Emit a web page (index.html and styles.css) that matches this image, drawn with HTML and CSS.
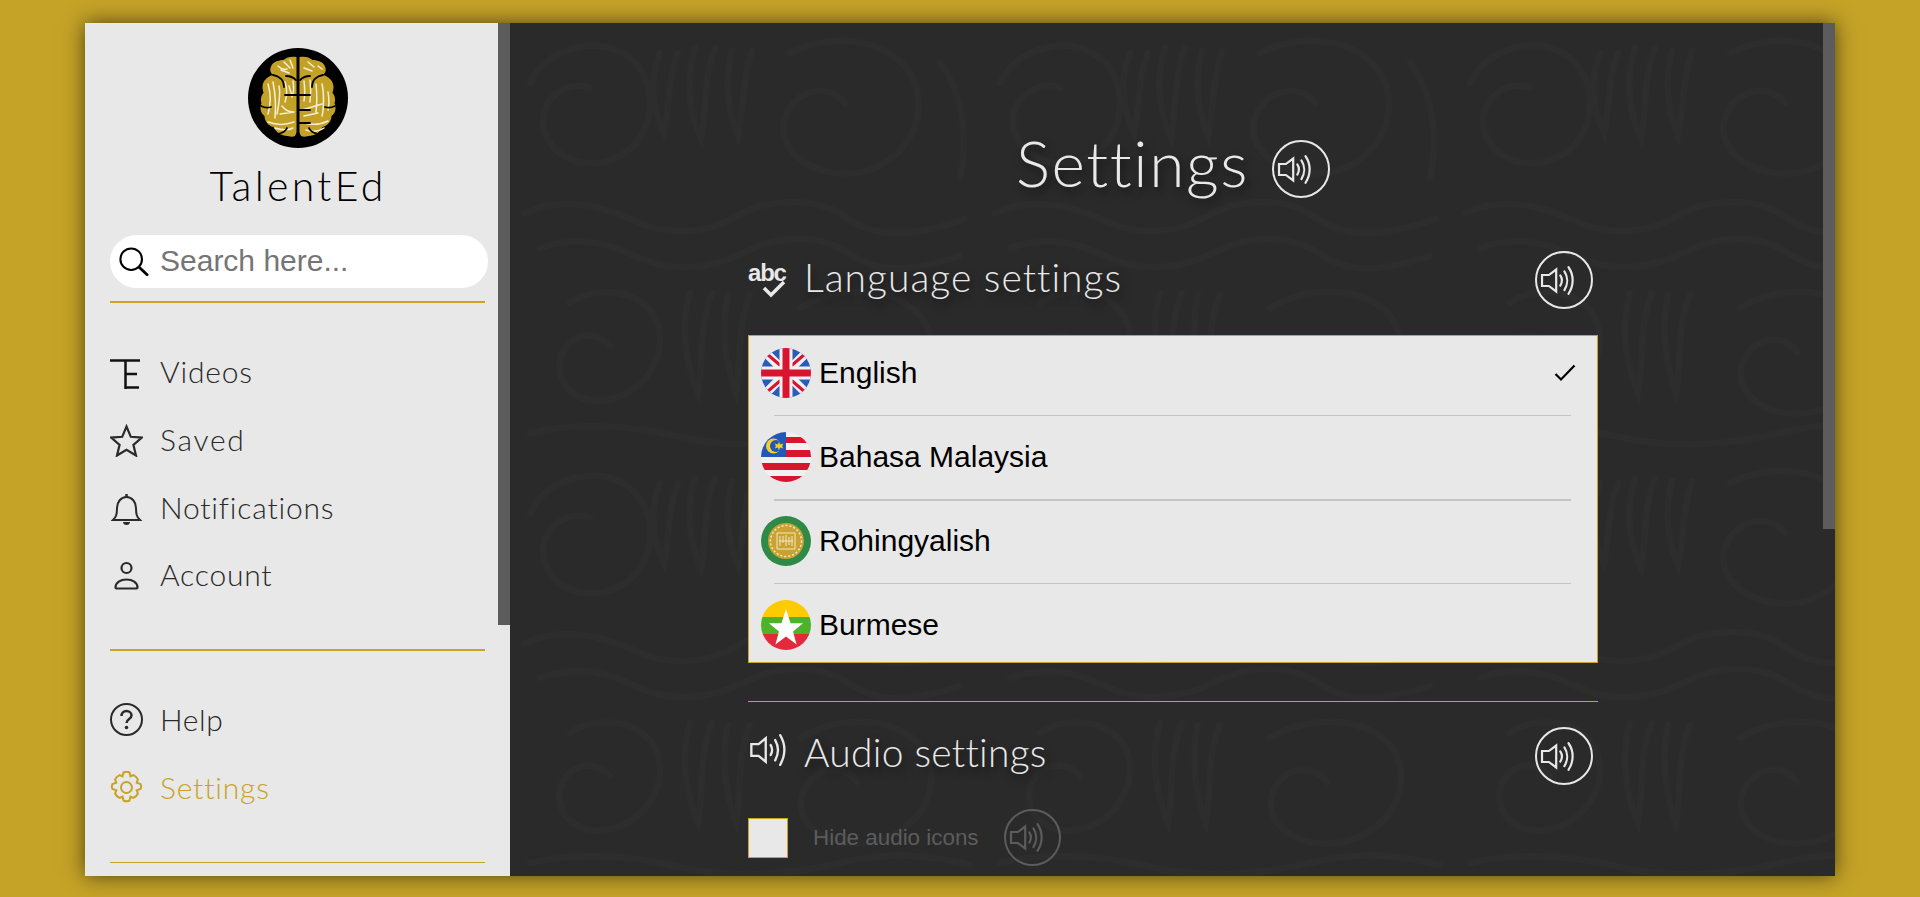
FILE: index.html
```html
<!DOCTYPE html>
<html lang="en">
<head>
<meta charset="utf-8">
<title>TalentEd - Settings</title>
<link rel="stylesheet" href="styles.css">
</head>
<body>
<svg class="defs" width="0" height="0" aria-hidden="true">
  <defs>
    <symbol id="speaker" viewBox="0 0 58 58">
      <path d="M5.5 23h7.500l8-6v24l-8-6H5.500z" fill="none" stroke="currentColor" stroke-width="2.400"/>
      <path d="M25.500 23.500c2.300 3.500 2.300 7.500 0 11M30 19c4 6 4 14 0 20.500M34.500 14.500c6 8.500 6 20 0 29" fill="none" stroke="currentColor" stroke-width="2.400" stroke-linecap="round"/>
    </symbol>
    <pattern id="swirl" width="470" height="430" patternUnits="userSpaceOnUse">
      <g fill="none" stroke="#2d2d2d" stroke-width="6" stroke-linecap="round">
        <path d="M20 60c15-35 70-50 100-25s25 75-5 95-70 10-80-20 20-55 45-45"/>
        <path d="M150 30c-12 30-6 60 4 80 6-30 4-55 14-80M185 25c-10 30-6 65 6 90 6-30 2-60 14-90M222 28c-8 30-4 60 6 85 6-30 4-55 14-85"/>
        <path d="M280 30c50-25 110-10 125 30s-15 85-60 90-80-25-70-55 45-35 60-15"/>
        <path d="M430 40c20 25 30 70 20 115"/>
        <path d="M15 190c40-18 80-6 110 8s70 14 100-4 80-22 110 0 70 20 120 2"/>
        <path d="M30 225c40-14 70-4 100 10s70 12 105-6 75-18 105 2 60 18 110 2"/>
        <path d="M60 280c25-18 70-14 85 15s-5 70-40 80-60-12-55-38 35-32 50-14"/>
        <path d="M180 270c-10 34-4 70 8 100 6-34 0-66 14-100M218 272c-8 34-2 70 8 98 6-34 0-66 14-98"/>
        <path d="M290 285c40-25 105-22 125 15s-10 85-60 90-75-30-60-55 40-22 52-6"/>
        <path d="M20 410c50-12 100-8 150 4s110 8 160-4 90-8 130 2"/>
      </g>
    </pattern>
  </defs>
</svg>

<div class="frame">
  <aside class="sidebar">
    <div class="scroll-thumb side-thumb"></div>
    <div class="brand">
      <svg class="logo" viewBox="0 0 100 100">
        <circle cx="50" cy="50" r="50" fill="#000"/>
        <path d="M48.500 9c-5-1-10 0-13 3-5 0-12 2-13 8-1 3 1 6 3 7-6 1-11 6-11 12 0 3 1 5 1 6-3 3-3 8-2 10-2 5-1 10 3 13 0 5 4 10 9 11 2 5 8 9 14 9 4 1 7 1 9-1z" fill="#c3a126"/>
        <path d="M51.500 9c5-1 10 0 13 3 5 0 12 2 13 8 1 3-1 6-3 7 6 1 11 6 11 12 0 3-1 5-1 6 3 3 3 8 2 10 2 5 1 10-3 13 0 5-4 10-9 11-2 5-8 9-14 9-4 1-7 1-9-1z" fill="#c3a126"/>
        <g fill="none" stroke="#f6efd6" stroke-width="1.500" stroke-linecap="round">
          <path d="M20 36c3 10 3 20 0 30M25 34c2 10 3 24 2 36M31 38c2 8 0 18-2 28M37 34c2 6 2 14 0 20M41 38l3 10M45 33c1 8 1 10-1 16M34 58c3 4 7 6 11 6M32 66l14-2M20 74c8 3 18 3 26 0M27 80c6 2 12 3 18 0M36 14l6 6M30 18c3 3 6 4 9 3M42 12l3 8M33 22l8 3"/>
          <path d="M56 33c1 8 1 14 0 20M62 32c1 8 1 15 0 22M68 36c1 10 1 20 0 28M74 36c2 8 2 24 0 32M80 44c1 6 1 14 0 18M54 62l20-6M56 68l14-3M56 75c8 2 16 2 24-2M58 82c6 2 12 2 18-2M60 14l6 5M70 18l4 3M56 20l8 3"/>
        </g>
        <g fill="none" stroke="#000" stroke-width="1.800" stroke-linecap="round">
          <path d="M50 9v22M50 48v36M50 84l-3 6M50 84l3 6M37 47h25M50 62h12M50 75h12"/>
          <path d="M25 27c6 1 11 5 11 12M75 27c-6 1-11 5-11 12M13 58c4 2 7 2 10 1M87 58c-4 2-7 2-10 1M30 86c4-1 8-3 9-6M70 86c-4-1-8-3-9-6M38 28c5 0 8 2 10 4M62 28c-5 0-8 2-10 4"/>
        </g>
      </svg>
      <div class="brand-name">TalentEd</div>
    </div>

    <label class="search">
      <svg class="search-icon" viewBox="0 0 32 32"><circle cx="13" cy="13" r="11.500" fill="none" stroke="#000" stroke-width="2.200"/><path d="M21.500 21.500 30 29.500" stroke="#000" stroke-width="3" stroke-linecap="round"/></svg>
      <input class="search-input" type="text" placeholder="Search here...">
    </label>
    <div class="gold-rule thick"></div>

    <nav class="nav first">
      <a class="nav-item">
        <svg class="nav-icon" viewBox="0 0 33 33" fill="none" stroke="#111" stroke-width="2.500"><path d="M0 4.500h30M15.500 4.500v29M16 18h11M16 31.500h13"/></svg>
        <span class="t-videos">Videos</span>
      </a>
      <a class="nav-item">
        <svg class="nav-icon" viewBox="0 0 33 33" fill="none" stroke="#2a2a2a" stroke-width="2.200" stroke-linejoin="miter"><path d="M16.500 2.500l4.300 10.300 11 .8-8.400 7.200 2.600 10.700-9.500-5.800L7 31.500l2.600-10.700L1.200 13.600l11-.8z"/></svg>
        <span class="t-saved">Saved</span>
      </a>
      <a class="nav-item">
        <svg class="nav-icon" viewBox="0 0 33 33" fill="none" stroke="#2a2a2a" stroke-width="2"><path d="M3 28c3-3 4-5 4-12 0-6 4-11 9.500-11S26 10 26 16c0 7 1 9 4 12z"/><path d="M16.500 2v3" stroke-width="2.500"/><path d="M13 30h7c0 4-7 4-7 0z" fill="#2a2a2a" stroke="none"/></svg>
        <span class="t-notif">Notifications</span>
      </a>
      <a class="nav-item">
        <svg class="nav-icon" viewBox="0 0 33 33" fill="none" stroke="#2a2a2a" stroke-width="2.200"><circle cx="16.500" cy="9" r="5"/><path d="M5.500 28.500c0-5 5-8 11-8s11 3 11 8c0 .5-.5 1-1 1h-20c-.5 0-1-.5-1-1z"/></svg>
        <span class="t-account">Account</span>
      </a>
    </nav>
    <div class="gold-rule thick gap-nav"></div>

    <nav class="nav second">
      <a class="nav-item">
        <svg class="nav-icon" viewBox="0 0 33 33" fill="none" stroke="#2a2a2a" stroke-width="2"><circle cx="16.500" cy="16.500" r="15.500"/><path d="M11.500 13c0-3 2.200-5 5-5s5 2 5 4.500c0 3.500-5 3.500-5 7.500" stroke-width="2.500"/><circle cx="16.500" cy="24.500" r="1.800" fill="#2a2a2a" stroke="none"/></svg>
        <span class="t-help">Help</span>
      </a>
      <a class="nav-item active">
        <svg class="nav-icon" viewBox="0 0 33 33" fill="none" stroke="#c9a227" stroke-width="2"><circle cx="16.500" cy="16.500" r="5.500"/><path d="M13.500 1.500c1.500-.8 4.500-.8 6 0l1 3.800 3-1.200c1.500.6 3.700 2.800 4.400 4.400l-1.200 3.200 3.800 1.300c.8 1.500.8 3.500 0 5l-3.800 1.300 1.200 3.200c-.7 1.600-2.900 3.800-4.400 4.400l-3-1.200-1 3.800c-1.500.8-4.500.8-6 0l-1-3.800-3 1.200c-1.500-.6-3.700-2.800-4.400-4.400l1.200-3.200-3.800-1.300c-.8-1.500-.8-3.500 0-5l3.800-1.300L5.100 8.500c.7-1.600 2.900-3.800 4.400-4.400l3 1.200z"/></svg>
        <span class="t-settings">Settings</span>
      </a>
    </nav>
    <div class="gold-rule thin gap-nav2"></div>
  </aside>

  <main class="main">
    <svg class="texture" width="100%" height="100%" aria-hidden="true"><rect width="100%" height="100%" fill="url(#swirl)"/></svg>
    <div class="scroll-thumb main-thumb"></div>
    <div class="content">
      <div class="page-title">
        <h1>Settings</h1>
        <button class="audio-btn" aria-label="Play"><svg viewBox="0 0 58 58"><use href="#speaker"/></svg></button>
      </div>

      <section class="section-head lang-head">
        <span class="abc-icon"><span class="abc-text">abc</span><svg class="abc-check" viewBox="0 0 26 18"><path d="M3 8l7 7L23 2" fill="none" stroke="#e8e8e8" stroke-width="3.500"/></svg></span>
        <h2 class="h-lang">Language settings</h2>
        <button class="audio-btn push" aria-label="Play"><svg viewBox="0 0 58 58"><use href="#speaker"/></svg></button>
      </section>

      <ul class="lang-list">
        <li class="lang-row">
          <svg class="flag" viewBox="0 0 50 50">
            <defs><clipPath id="c1"><circle cx="25" cy="25" r="25"/></clipPath></defs>
            <g clip-path="url(#c1)">
              <rect width="50" height="50" fill="#2a5cb8"/>
              <path d="M0 0l50 50M50 0 0 50" stroke="#f1f1f1" stroke-width="9"/>
              <path d="M6 6l14 12M44 6 30 18M6 44l14-12M44 44 30 32" stroke="#d8142f" stroke-width="3"/>
              <path d="M25 0v50M0 25h50" stroke="#f1f1f1" stroke-width="13"/>
              <path d="M25 0v50M0 25h50" stroke="#d8142f" stroke-width="7"/>
            </g>
          </svg>
          <span class="lang-name">English</span>
          <svg class="tick" viewBox="0 0 22 18"><path d="M1.500 10l5.500 5.500L20.500 1.500" fill="none" stroke="#000" stroke-width="2.200"/></svg>
        </li>
        <li class="lang-row">
          <svg class="flag" viewBox="0 0 50 50">
            <defs><clipPath id="c2"><circle cx="25" cy="25" r="25"/></clipPath></defs>
            <g clip-path="url(#c2)">
              <rect width="50" height="50" fill="#f1f1f1"/>
              <path d="M25 5h25v6H25zM25 18h25v7H25zM0 31h50v7H0zM0 44h50v7H0z" fill="#d8142f"/>
              <rect width="25" height="25" fill="#2358b8"/>
              <circle cx="12.500" cy="14" r="7.500" fill="#f5cf2a"/>
              <circle cx="15" cy="14" r="6" fill="#2358b8"/>
              <path d="M18 9.500l1.100 2.900 3-.8-.8 2.400 0 0-.1 0 .8 2.400-3-.8-1 2.900-1.100-2.900-3 .8.900-2.400-.9-2.400 3 .8z" fill="#f5cf2a"/>
            </g>
          </svg>
          <span class="lang-name">Bahasa Malaysia</span>
        </li>
        <li class="lang-row">
          <svg class="flag" viewBox="0 0 50 50">
            <circle cx="25" cy="25" r="25" fill="#2e8a46"/>
            <circle cx="25" cy="25" r="18" fill="#c9a233"/>
            <circle cx="25" cy="25" r="15.500" fill="none" stroke="#f2e8c2" stroke-width="1.500" stroke-dasharray="2 2"/>
            <path d="M16 17h18v16H16z" fill="none" stroke="#f2e8c2" stroke-width="1"/>
            <path d="M19 20v10M22 20v7M25 19v11M28 21v8M31 20v10M18 25h14" stroke="#f2e8c2" stroke-width="1"/>
          </svg>
          <span class="lang-name">Rohingyalish</span>
        </li>
        <li class="lang-row">
          <svg class="flag" viewBox="0 0 50 50">
            <defs><clipPath id="c4"><circle cx="25" cy="25" r="25"/></clipPath></defs>
            <g clip-path="url(#c4)">
              <rect width="50" height="17" fill="#fdcb01"/>
              <rect y="17" width="50" height="17" fill="#4eb32a"/>
              <rect y="34" width="50" height="16" fill="#e32a3d"/>
              <path d="M25 9l4.600 14.200H42L32 31.500l3.600 13-10.600-8-10.600 8 3.600-13-10-8.300h12.400z" fill="#fff"/>
            </g>
          </svg>
          <span class="lang-name">Burmese</span>
        </li>
      </ul>

      <div class="gold-rule section-rule"></div>

      <section class="section-head audio-head">
        <svg class="plain-speaker" viewBox="0 0 42 40"><path d="M2.500 13.500h8l8-6.500v26l-8-6.500h-8z" fill="none" stroke="#e8e8e8" stroke-width="2.600"/><path d="M24 14.500c2 3.500 2 7.500 0 11M29 9c4 7 4 15 0 22.500M34.500 3.500c6 10 6 22 0 33" fill="none" stroke="#e8e8e8" stroke-width="2.600" stroke-linecap="round"/></svg>
        <h2 class="h-audio">Audio settings</h2>
        <button class="audio-btn push" aria-label="Play"><svg viewBox="0 0 58 58"><use href="#speaker"/></svg></button>
      </section>

      <div class="hide-row">
        <span class="checkbox"></span>
        <span class="hide-label">Hide audio icons</span>
        <button class="audio-btn muted" aria-label="Play"><svg viewBox="0 0 58 58"><use href="#speaker"/></svg></button>
      </div>
    </div>
  </main>
</div>
</body>
</html>
```

FILE: styles.css
```css
* { box-sizing: border-box; }
html, body { margin: 0; height: 100%; overflow: hidden; }
body {
  background: #c5a327;
  padding: 23px 85px 21px;
  font-family: "Lato", "Liberation Sans", sans-serif;
}
.defs { position: absolute; }

.frame {
  display: flex;
  height: 853px;
  box-shadow: 0 0 20px rgba(0, 0, 0, .6);
  overflow: hidden;
}

/* sidebar */
.sidebar {
  position: relative;
  flex: 0 0 425px;
  background: #e8e8e8;
  padding: 25px 0 0 25px;
  overflow: hidden;
}
.scroll-thumb { position: absolute; top: 0; right: 0; width: 12px; background: #5c5c5c; }
.side-thumb { height: 602px; }
.main-thumb { height: 506px; z-index: 1; }

.brand { display: flex; flex-direction: column; align-items: center; width: 376px; }
.logo { width: 100px; height: 100px; display: block; }
.brand-name {
  margin-top: 13px;
  height: 49px;
  line-height: 49px;
  font-size: 41px;
  font-weight: 300;
  letter-spacing: 3.300px;
  color: #000;
}

.search {
  display: flex;
  align-items: center;
  width: 378px;
  height: 53px;
  margin-top: 25px;
  padding-left: 9px;
  background: #fff;
  border-radius: 27px;
}
.search-icon { width: 30px; height: 30px; flex: none; }
.search-input {
  flex: 1;
  min-width: 0;
  margin-left: 9px;
  padding-bottom: 3px;
  border: 0;
  outline: 0;
  background: transparent;
  font-family: "Liberation Sans", Arial, sans-serif;
  font-size: 30px;
  color: #111;
}
.search-input::placeholder { color: #757575; opacity: 1; }

.gold-rule { background: #c9a227; }
.sidebar .gold-rule { width: 375px; }
.thick { height: 2px; margin-top: 13px; }
.thin { height: 1px; }
.gap-nav { margin-top: 39px; }
.gap-nav2 { margin-top: 41px; }

.nav { display: flex; flex-direction: column; }
.nav.first { margin-top: 36px; }
.nav.second { margin-top: 35px; }
.nav-item {
  display: flex;
  align-items: center;
  gap: 17px;
  height: 67.700px;
  font-size: 30px;
  font-weight: 300;
  color: #2a2a2a;
  letter-spacing: .8px;
}
.nav-item span { padding-bottom: 3px; }
.nav.second .nav-item span { padding-bottom: 1px; }
.nav-item .t-saved { letter-spacing: 1.700px; }
.nav-item .t-help { letter-spacing: .6px; }
.nav-item.active { color: #c9a227; }
.nav-icon { width: 33px; height: 33px; flex: none; }

/* main */
.main {
  position: relative;
  flex: 1;
  background: #2a2a2a;
  overflow: hidden;
}
.texture { position: absolute; inset: 0; }
.content {
  position: relative;
  width: 850px;
  margin-left: 238px;
}

.page-title {
  display: flex;
  justify-content: center;
  align-items: center;
  gap: 23px;
  padding-top: 92px;
  height: 200px;
}
h1, h2 {
  margin: 0;
  font-weight: 300;
  color: #e8e8e8;
  text-shadow: 3px 5px 8px rgba(0, 0, 0, .55);
}
h1 { font-size: 64px; line-height: 64px; letter-spacing: 1.600px; margin-bottom: 12px; }
h2 { font-size: 39px; line-height: 50px; }
.h-lang { letter-spacing: 1px; margin-bottom: 6px; }
.h-audio { letter-spacing: .25px; margin-bottom: 8px; }

.audio-btn {
  flex: none;
  width: 58px;
  height: 58px;
  padding: 0;
  border: 2.500px solid #e8e8e8;
  border-radius: 50%;
  background: transparent;
  color: #e8e8e8;
}
.audio-btn svg { display: block; width: 53px; height: 53px; }
.audio-btn.muted { color: #5c5c5c; border-color: #5c5c5c; width: 57px; height: 57px; }

.section-head { display: flex; align-items: center; height: 58px; padding-right: 5px; }
.push { margin-left: auto; }
.lang-head { margin-top: 28px; }

.abc-icon { position: relative; flex: none; width: 40px; height: 40px; margin-right: 16px; }
.abc-text {
  position: absolute;
  top: -2px;
  left: 0;
  font-family: "Liberation Sans", sans-serif;
  font-weight: 700;
  font-size: 24px;
  letter-spacing: -1.200px;
  line-height: 30px;
  color: #e8e8e8;
}
.abc-check { position: absolute; left: 13px; top: 20px; width: 26px; height: 18px; }

.lang-list {
  list-style: none;
  margin: 26px 0 0;
  padding: 0;
  height: 328px;
  background: #e8e8e8;
  border: 1px solid #c9a227;
  overflow: hidden;
}
.lang-row {
  position: relative;
  display: flex;
  align-items: center;
  gap: 8px;
  height: 84px;
  padding: 0 12px 2px;
}
.lang-row:first-child { margin-top: -4px; }
.lang-row::after {
  content: "";
  position: absolute;
  left: 25px;
  right: 26px;
  bottom: 0;
  height: 1px;
  background: #c4c4c4;
}
.lang-row:nth-child(2)::after { height: 2px; bottom: -1px; }
.lang-row:last-child::after { display: none; }
.flag { width: 50px; height: 50px; flex: none; }
.lang-name {
  font-family: "Liberation Sans", Arial, sans-serif;
  font-size: 30px;
  color: #000;
}
.tick { width: 22px; height: 18px; margin-left: auto; margin-right: 9px; }

.section-rule { height: 1px; margin-top: 38px; }
.audio-head { margin-top: 25px; }
.plain-speaker { width: 40px; height: 36px; flex: none; margin-right: 16px; margin-bottom: 12px; }

.hide-row { display: flex; align-items: center; margin-top: 24px; }
.checkbox { width: 40px; height: 40px; background: #e8e8e8; border: 1px solid #c9a227; flex: none; }
.hide-label {
  margin-left: 25px;
  font-family: "Liberation Sans", Arial, sans-serif;
  font-size: 22.400px;
  color: #5c5c5c;
}
.hide-row .audio-btn { margin-left: 25px; }
```
